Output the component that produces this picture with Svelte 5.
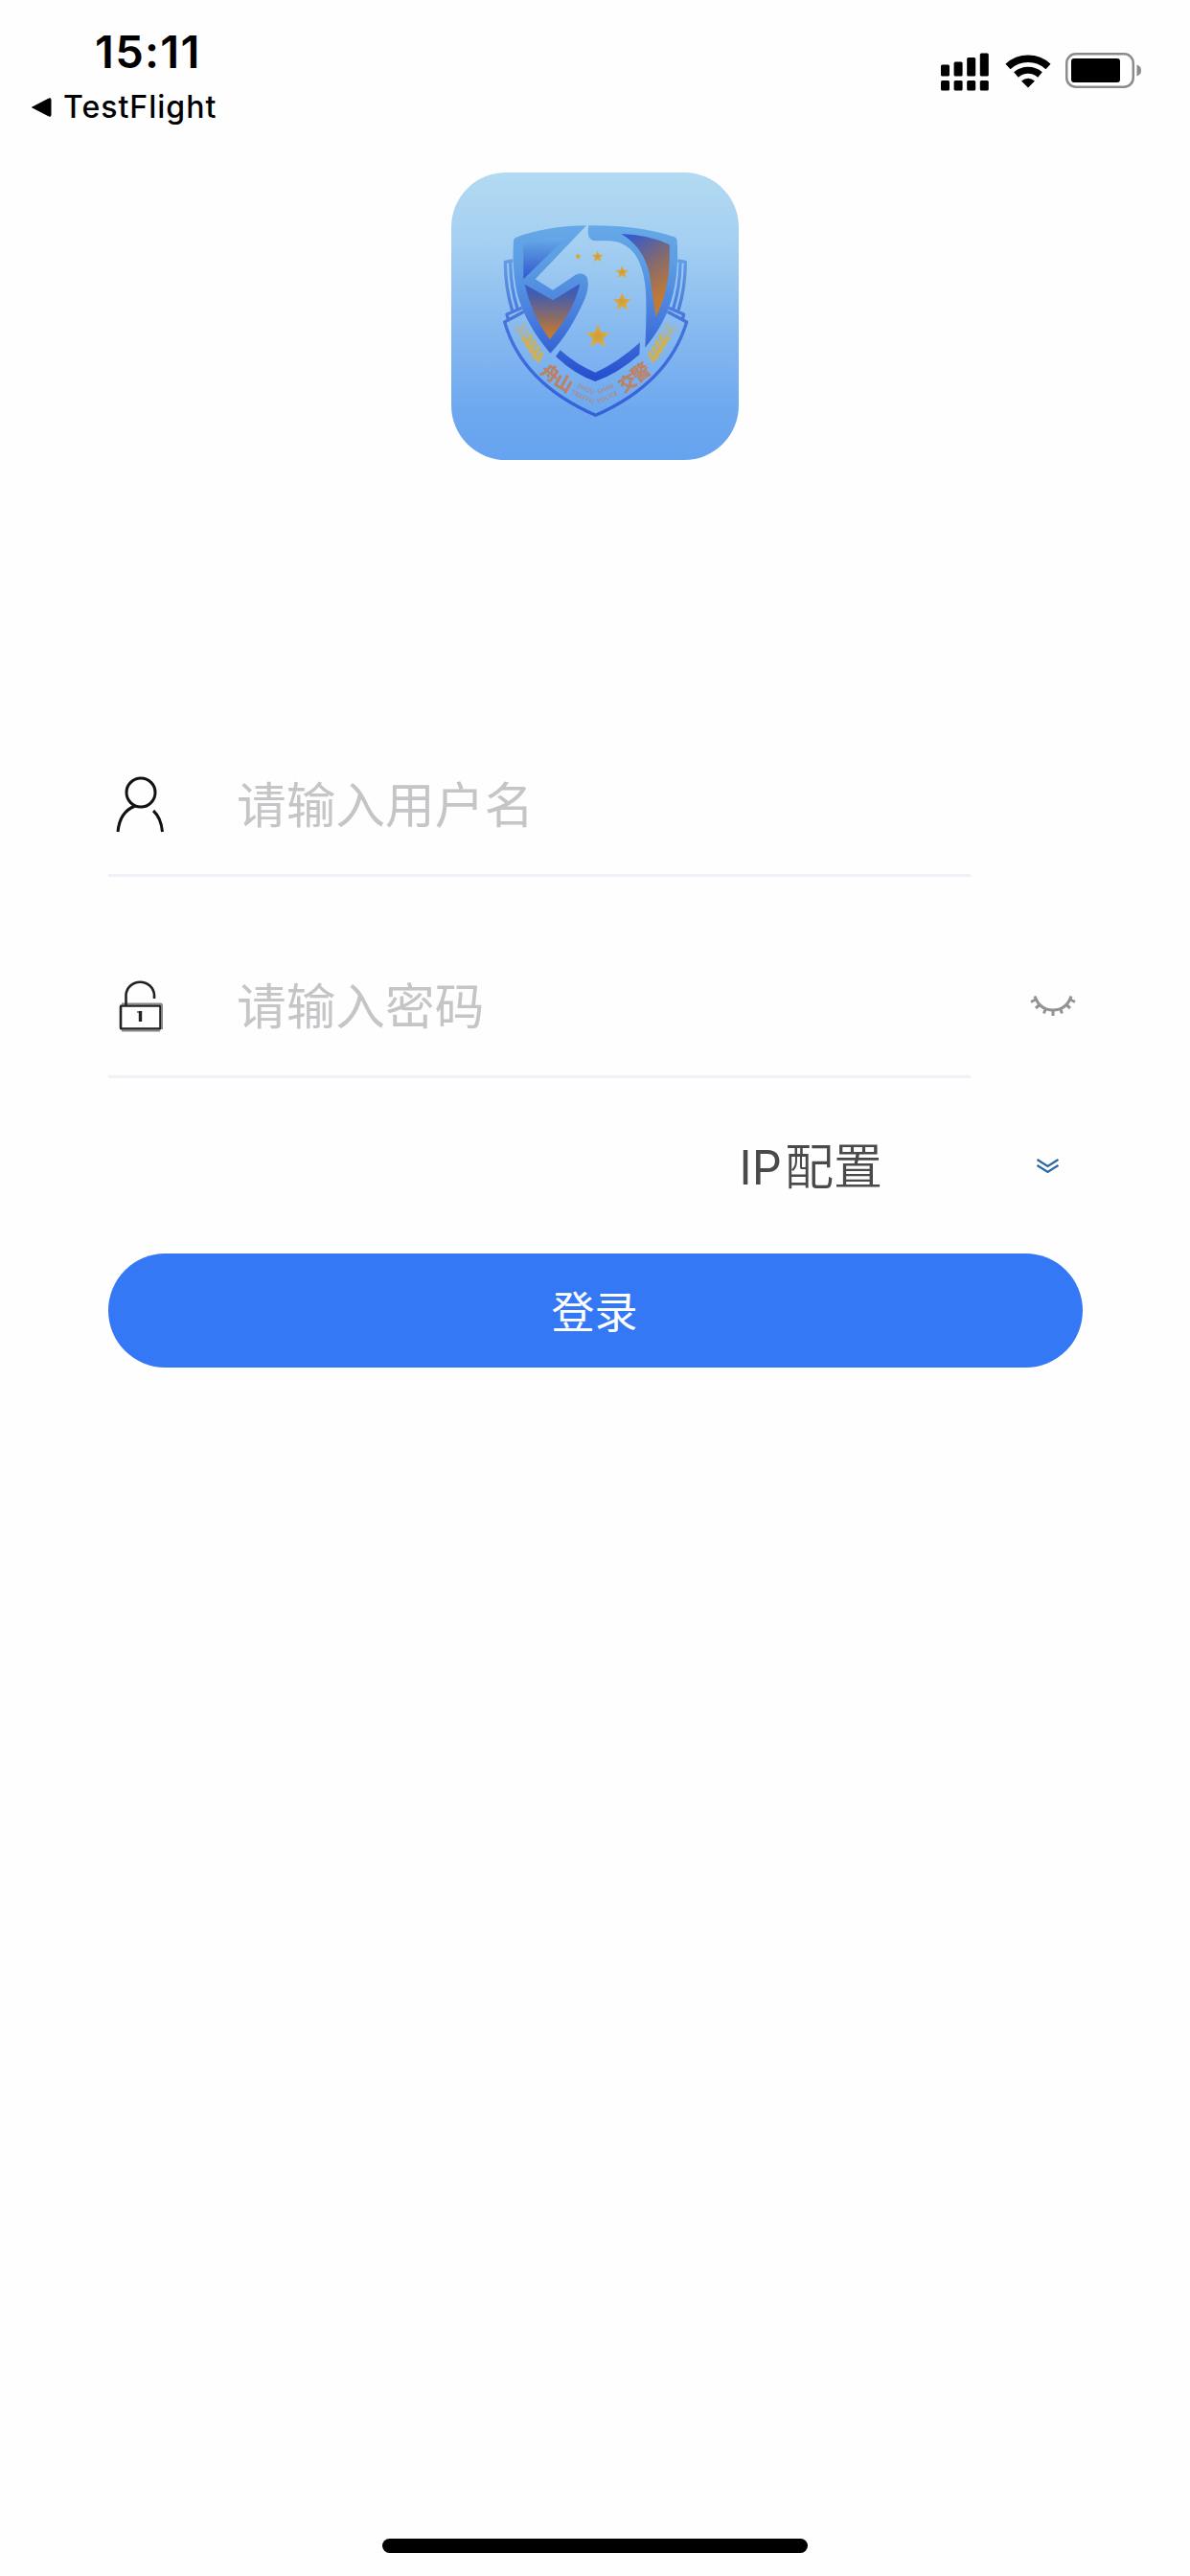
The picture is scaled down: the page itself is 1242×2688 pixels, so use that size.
<script>
  /**
   * Login screen: status bar, app logo, credentials form, home indicator.
   */
  let username = $state('');
  let password = $state('');

  // bar heights of the dual-SIM signal icon
  const BARS = [
    { x: 0, h: 12 },
    { x: 13.6, h: 15 },
    { x: 27.2, h: 19.5 },
    { x: 40.8, h: 24 },
  ];

  const STARS = [
    { x: 430, y: 293, r: 11 },
    { x: 491, y: 294, r: 20 },
    { x: 568, y: 343, r: 22 },
    { x: 568, y: 436, r: 31 },
    { x: 492, y: 544, r: 40 },
  ];

  // wheat ears on the ribbon, mirrored around the middle
  const GRAINS = [0, 1, 2, 3, 4, 5];

  function starPoints(cx, cy, r) {
    const pts = [];
    for (let i = 0; i < 10; i++) {
      const rad = i % 2 ? r * 0.42 : r;
      const a = (Math.PI / 5) * i - Math.PI / 2;
      pts.push(`${(cx + rad * Math.cos(a)).toFixed(1)},${(cy + rad * Math.sin(a)).toFixed(1)}`);
    }
    return pts.join(' ');
  }
</script>

{#snippet wheat()}
  <g fill="none" stroke="#cdb158" stroke-width="13" stroke-linecap="round">
    {#each GRAINS as i}
      <path
        opacity={i < 2 ? 0.4 : 0.9}
        d="M{252 + i * 11} {526 + i * 18} l-16 -10 M{252 + i * 11} {526 + i * 18} l9 -20"
      />
    {/each}
    <path d="M262 545 L308 624" stroke-width="6" />
  </g>
{/snippet}

<div class="screen">
  <header class="status">
    <div class="status-left">
      <div class="time">15:11</div>
      <div class="back">
        <svg width="22" height="22" viewBox="0 0 22 22"><path d="M1.5 11 L19 2 Q21 1 21 3 V19 Q21 21 19 20 Z" stroke="#000" stroke-linejoin="round" /></svg>
        <span>TestFlight</span>
      </div>
    </div>
    <div class="status-right">
      <svg class="signal" width="50" height="40" viewBox="0 0 50 40">
        {#each BARS as bar}
          <rect x={bar.x} y={24.5 - bar.h} width="9" height={bar.h} rx="1.5" />
          <rect x={bar.x} y="29" width="9" height="10.5" rx="1.5" />
        {/each}
      </svg>
      <svg class="wifi" width="48" height="36" viewBox="0 0 48 36">
        <path d="M3 13.5 A31 31 0 0 1 45 13.5" fill="none" stroke="#000" stroke-width="7.5" />
        <path d="M11.5 22 A19 19 0 0 1 36.5 22" fill="none" stroke="#000" stroke-width="7" />
        <path d="M24 35.5 L17 28.5 Q24 23 31 28.5 Z" />
      </svg>
      <svg class="battery" width="80" height="37" viewBox="0 0 80 37">
        <rect x="1.25" y="1.25" width="69.5" height="34.5" rx="9.5" fill="#fff" stroke="#8b8b8b" stroke-width="2.5" />
        <rect x="6" y="6" width="51" height="25" rx="3" />
        <path d="M74.5 12.5 Q79 14 79 18.5 Q79 23 74.5 24.5 Z" fill="#8b8b8b" />
      </svg>
    </div>
  </header>

  <svg class="logo" viewBox="33 30 900 900" role="img" aria-label="舟山交警">
    <defs>
      <linearGradient id="shield" gradientUnits="userSpaceOnUse" x1="0" y1="195" x2="0" y2="690">
        <stop offset="0" stop-color="#66a9e7" />
        <stop offset="0.25" stop-color="#5b9ce4" />
        <stop offset="0.6" stop-color="#467bdc" />
        <stop offset="1" stop-color="#234bce" />
      </linearGradient>
      <linearGradient id="corner" x1="0" y1="0" x2="0" y2="1">
        <stop offset="0" stop-color="#67aae8" />
        <stop offset="0.4" stop-color="#5088dc" />
        <stop offset="1" stop-color="#3058cc" />
      </linearGradient>
      <linearGradient id="mouth" x1="0" y1="0" x2="0" y2="1">
        <stop offset="0" stop-color="#345bcd" />
        <stop offset="0.2" stop-color="#445dad" />
        <stop offset="0.6" stop-color="#8a6b68" />
        <stop offset="1" stop-color="#d17d20" />
      </linearGradient>
      <linearGradient id="mane" gradientUnits="userSpaceOnUse" x1="600" y1="225" x2="720" y2="400">
        <stop offset="0" stop-color="#345bcd" />
        <stop offset="0.5" stop-color="#826a70" />
        <stop offset="1" stop-color="#c27a34" />
      </linearGradient>
      <linearGradient id="ribbon" gradientUnits="userSpaceOnUse" x1="0" y1="300" x2="0" y2="790">
        <stop offset="0" stop-color="#609de7" />
        <stop offset="0.4" stop-color="#4674da" />
        <stop offset="1" stop-color="#3560d8" />
      </linearGradient>
      <radialGradient id="gold">
        <stop offset="0" stop-color="#d29c35" />
        <stop offset="1" stop-color="#dbb148" />
      </radialGradient>
    </defs>

    <!-- side plates and ribbon -->
    <g fill="none" stroke="url(#ribbon)" stroke-width="10" stroke-linejoin="round">
      <path d="M226 306 L202 310 Q202 390 224 462 M218 312 Q219 390 240 456" />
      <path d="M742 306 L766 310 Q766 390 744 462 M750 312 Q749 390 728 456" />
      <path d="M254 454 L207 474 L211 490 M260 466 L200 498 Q255 690 485 790 Q712 690 770 498 L710 466 M714 454 L761 474 L757 490" />
    </g>

    <!-- shield -->
    <path fill="url(#shield)" d="M456 196 Q328 198 236 233 Q228 236 228 246 Q222 335 240 412 Q268 510 343 596 Q405 532 452 424 Q467 382 458 358 Q446 340 422 350 L351 398 L296 364 Z" />
    <path fill="url(#corner)" d="M259 254 Q320 232 392 234 L259 364 Z" />
    <path fill="url(#mouth)" d="M263 380 L351 430 L436 378 Q416 468 341 552 Q284 475 263 380 Z" />
    <path fill="url(#shield)" d="M463 196 Q620 194 732 232 Q740 235 740 246 Q746 335 727 412 Q706 500 640 578 Q647 420 639 376 Q622 248 526 244 L480 244 Q461 240 461 215 Z" />
    <path fill="url(#mane)" d="M565 222 Q650 224 716 256 Q722 390 673 482 Q663 410 653 344 Q632 260 565 222 Z" />
    <path fill="url(#shield)" d="M374 586 Q425 632 484 656 Q550 628 624 562 L622 600 Q554 660 484 684 Q421 663 360 606 Z" />

    {#each STARS as s}
      <polygon points={starPoints(s.x, s.y, s.r)} fill="url(#gold)" />
    {/each}

    {@render wheat()}
    <g transform="matrix(-1 0 0 1 970 0)">{@render wheat()}</g>

    <g class="emblem-text" text-anchor="middle">
      <text transform="translate(332 674) rotate(38)" font-size="56">舟</text>
      <text transform="translate(376 706) rotate(30)" font-size="56">山</text>
      <text transform="translate(597 706) rotate(-32)" font-size="56">交</text>
      <text transform="translate(640 672) rotate(-38)" font-size="58">警</text>
      <text class="latin" transform="translate(452 714) rotate(24)" font-size="20">ZHOU</text>
      <text class="latin" transform="translate(520 714) rotate(-24)" font-size="20">SHAN</text>
      <text class="latin" transform="translate(444 740) rotate(24)" font-size="20">TRAFFIC</text>
      <text class="latin" transform="translate(526 740) rotate(-24)" font-size="20">POLICE</text>
    </g>
  </svg>

  <form class="form" onsubmit={(e) => e.preventDefault()}>
    <div class="row">
      <label class="field">
        <svg class="icon" width="50" height="60" viewBox="0 0 50 60" fill="none" stroke="#111" stroke-width="3">
          <circle cx="26" cy="18" r="15" />
          <path d="M20 32 Q4 38 2 59 M39 37 Q47 44 48.5 59" />
        </svg>
        <input type="text" placeholder="请输入用户名" bind:value={username} />
      </label>
    </div>

    <div class="row">
      <label class="field">
        <svg class="icon" width="50" height="60" viewBox="0 0 50 60" fill="none" stroke="#222" stroke-width="2.6">
          <rect x="5" y="30.5" width="41.5" height="24" rx="1" />
          <path stroke="#888" stroke-width="2" d="M6 28.5 H47 Q48 28.5 48 31 V55 M6 56.5 H46" />
          <path d="M10.5 30 V19 A14.8 14.5 0 0 1 40 19 V23" />
          <path stroke="#888" stroke-width="2" d="M22 37 H24" />
          <path stroke-width="3.4" d="M25.5 36 V47" />
        </svg>
        <input type="password" placeholder="请输入密码" bind:value={password} />
      </label>
      <svg class="eye" width="48" height="24" viewBox="0 0 48 24" fill="none" stroke="#939393" stroke-width="3">
        <path d="M5 1.5 Q10 16 24 16 Q38 16 43 1.5" />
        <path d="M6 5 L1 7.5 M42 5 L47 7.5 M10 10.5 L6 14 M38 10.5 L42 14 M16.5 14 L14.5 19.5 M31.5 14 L33.5 19.5 M24 16 V22" />
      </svg>
    </div>

    <div class="config">
      <span class="config-label"><span class="ip">IP</span>配置</span>
      <svg class="chevron" width="24" height="18" viewBox="0 0 24 18" fill="none" stroke="#2b67a8" stroke-width="2.2">
        <path d="M1.5 2 L12.5 9 L23.5 2 M1.5 8 L12.5 15 L23.5 8" />
      </svg>
    </div>

    <button class="login" type="submit">登录</button>
  </form>

  <div class="home"></div>
</div>

<style>
  :global(body) {
    margin: 0;
    background: #fefefe;
  }

  .screen {
    display: flex;
    flex-direction: column;
    width: 1242px;
    height: 2688px;
    box-sizing: border-box;
    padding-bottom: 24px;
    background: #fefefe;
    font-family: Inter, 'Noto Sans CJK SC', sans-serif;
  }

  /* ── Status bar ── */
  .status {
    display: flex;
    justify-content: space-between;
    height: 180px;
    box-sizing: border-box;
    padding: 26px 50px 0 32px;
  }
  .time {
    margin-left: 67px;
    height: 56px;
    font-size: 47px;
    line-height: 55px;
    font-weight: 600;
    letter-spacing: 1.3px;
  }
  .back {
    display: flex;
    align-items: center;
    gap: 12px;
    margin-top: 10px;
    font-size: 32px;
    line-height: 40px;
    letter-spacing: 1px;
    font-weight: 450;
  }
  .status-right {
    display: flex;
    align-items: flex-start;
    padding-top: 29px;
  }
  .wifi { margin: 1px 15px 0 17px; }

  .logo {
    align-self: center;
    flex: none;
    width: 300px;
    height: 300px;
    border-radius: 57px;
    background: linear-gradient(#b2daf1, #a4cff1 25%, #86b9f0 55%, #6ea9ef 82%, #66a3ef);
  }
  .emblem-text {
    font-family: 'Noto Sans CJK SC', sans-serif;
    font-weight: 900;
    fill: #bd8264;
  }
  .latin {
    font-weight: 500;
    opacity: 0.75;
  }

  /* ── Form ── */
  .form {
    display: flex;
    flex-direction: column;
    margin: 225px 112px 0 113px;
  }
  .row {
    display: flex;
    align-items: center;
    height: 210px;
  }
  .field {
    display: flex;
    align-items: center;
    width: 900px;
    height: 210px;
    box-sizing: border-box;
    padding: 60px 0 0 8px;
    border-bottom: 3px solid #f0f0f6;
  }
  .icon {
    flex: none;
    margin-right: 76px;
  }
  input {
    flex: 1;
    min-width: 0;
    padding: 0 0 4px;
    border: none;
    outline: none;
    background: transparent;
    font-family: 'Noto Sans CJK SC', sans-serif;
    font-weight: 400;
    font-size: 51.7px;
    line-height: 76px;
  }
  input::placeholder {
    color: #c5c5c7;
    opacity: 1;
  }
  .eye {
    margin: 60px 0 0 62px;
  }

  .config {
    display: flex;
    align-items: center;
    justify-content: flex-end;
    height: 183px;
    padding-right: 25px;
    color: #4a4a4a;
    font-family: 'Noto Sans CJK SC', sans-serif;
    font-weight: 350;
    font-size: 51px;
  }
  .config-label {
    padding-bottom: 5px;
  }
  .ip {
    margin-right: 3px;
    font-family: Inter, sans-serif;
    font-size: 49px;
    font-weight: 400;
  }
  .chevron {
    margin-left: 160px;
  }

  .login {
    height: 119px;
    padding: 0 2px 2px 0;
    border: none;
    border-radius: 60px;
    background: #3478f6;
    color: #fff;
    font-family: 'Noto Sans CJK SC', sans-serif;
    font-size: 45px;
    line-height: 117px;
  }

  .home {
    align-self: center;
    width: 444px;
    height: 15px;
    margin-top: auto;
    border-radius: 8px;
    background: #000;
  }
</style>
